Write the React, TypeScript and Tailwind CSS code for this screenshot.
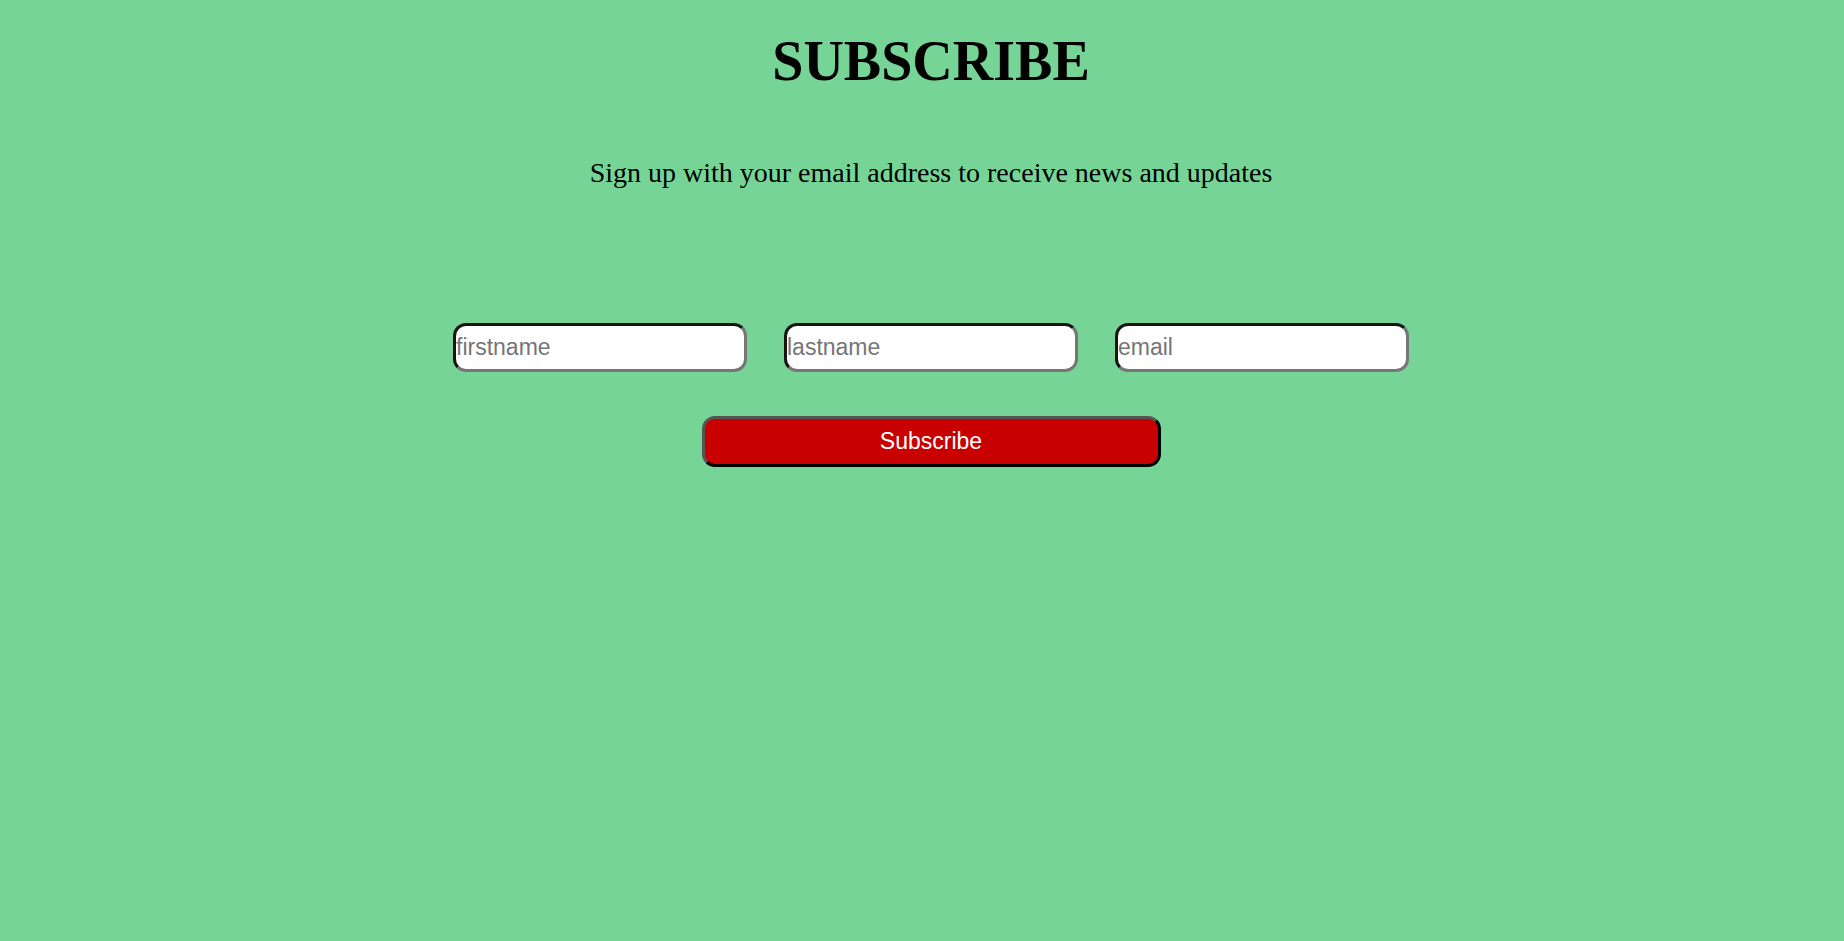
import React from "react";

const inputCls =
  "w-[294px] h-[49px] bg-white rounded-[13px] border-[3px] border-solid border-t-[#151515] border-l-[#151515] border-b-[#767676] border-r-[#767676] p-0 text-[23px] text-black placeholder:text-[#757575] outline-none font-['Liberation_Sans',Arial,sans-serif]";

export default function App() {
  return (
    <div className="min-h-[941px] w-full bg-[#76d596] pl-[18px] flex flex-col items-center">
      <h1 className="mt-[33px] text-[56px] leading-[56px] font-bold text-black font-['Liberation_Serif','Times_New_Roman',serif]">
        SUBSCRIBE
      </h1>
      <p className="mt-[70px] text-[28px] leading-[28px] text-black font-['Liberation_Serif','Times_New_Roman',serif]">
        Sign up with your email address to receive news and updates
      </p>
      <div className="mt-[136px] flex gap-[37px]">
        <input className={inputCls} placeholder="firstname" />
        <input className={inputCls} placeholder="lastname" />
        <input className={inputCls} placeholder="email" />
      </div>
      <button className="mt-[44px] w-[459px] h-[51px] bg-[#c80000] rounded-[13px] border-[3px] border-solid border-t-[#555555] border-l-[#555555] border-b-black border-r-black text-white text-[23px] font-['Liberation_Sans',Arial,sans-serif]">
        Subscribe
      </button>
    </div>
  );
}
